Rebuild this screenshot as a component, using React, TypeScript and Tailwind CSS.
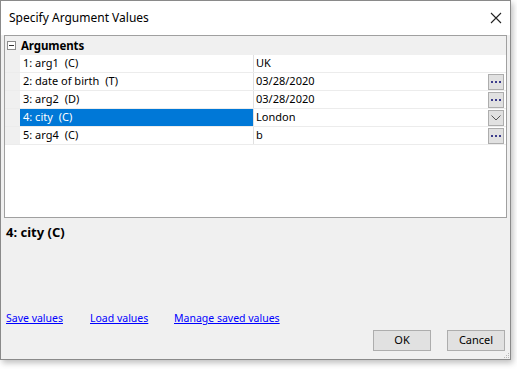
import React from "react";

const rows = [
  { label: "1: arg1  (C)", value: "UK", btn: "" },
  { label: "2: date of birth  (T)", value: "03/28/2020", btn: "dots" },
  { label: "3: arg2  (D)", value: "03/28/2020", btn: "dots" },
  { label: "4: city  (C)", value: "London", btn: "drop", sel: true },
  { label: "5: arg4  (C)", value: "b", btn: "dots" },
];

function Dots() {
  return (
    <div className="w-[16px] h-[16px] bg-[#e1e1e1] border border-[#adadad] flex items-center justify-center gap-[2px] mr-[2px]">
      <span className="w-[2px] h-[2px] bg-[#3c3c8c]" />
      <span className="w-[2px] h-[2px] bg-[#3c3c8c]" />
      <span className="w-[2px] h-[2px] bg-[#3c3c8c]" />
    </div>
  );
}

function Drop() {
  return (
    <div className="w-[16px] h-[16px] bg-[#e1e1e1] border border-[#adadad] flex items-center justify-center mr-[2px]">
      <svg width="10" height="6" viewBox="0 0 10 6">
        <path d="M0.5 0.5 L5 5 L9.5 0.5" stroke="#555" strokeWidth="1" fill="none" />
      </svg>
    </div>
  );
}

export default function App() {
  return (
    <div
      className="w-[517px] h-[369px] bg-white relative"
      style={{ fontFamily: '"Noto Sans", "Open Sans", sans-serif' }}
    >
      <div className="w-[511px] h-[360px] bg-[#f0f0f0] border border-[#8a8a8a] flex flex-col shadow-[2px_3px_6px_rgba(0,0,0,0.25)] relative">
        {/* Title bar */}
        <div className="h-[34px] bg-white flex items-center justify-between pl-[8px] pr-[3px] shrink-0">
          <span className="text-[12px] text-black">Specify Argument Values</span>
          <svg width="12" height="12" viewBox="0 0 12 12" className="mr-[5px]">
            <path d="M1 1 L11 11 M11 1 L1 11" stroke="#222" strokeWidth="1.1" />
          </svg>
        </div>
        {/* Grid */}
        <div className="mx-[3px] h-[183px] bg-white border border-[#a0a0a0] flex flex-col text-[11px] text-black">
          <div className="h-[19px] bg-[#f0f0f0] flex items-center shrink-0">
            <div className="w-[9px] h-[9px] border border-[#8c8c8c] bg-white ml-[2px] flex items-center justify-center">
              <span className="w-[5px] h-[1px] bg-[#333]" />
            </div>
            <span className="ml-[5px] font-bold text-[11.5px] tracking-[-0.1px]">Arguments</span>
          </div>
          {rows.map((r, i) => (
            <div key={i} className="h-[18px] flex shrink-0 border-b border-[#ececec]">
              <div className="w-[15px] bg-[#f0f0f0]" />
              <div
                className={
                  "w-[234px] flex items-center pl-[3px] border-r border-[#e0e0e0] " +
                  (r.sel ? "bg-[#0078d7] text-white" : "")
                }
              >
                {r.label.split("  ").map((p, j) => (
                  <span key={j} className={j > 0 ? "ml-[6px]" : ""}>
                    {p}
                  </span>
                ))}
              </div>
              <div className="flex-1 flex items-center justify-between pl-[2px]">
                <span>{r.value}</span>
                {r.btn === "dots" ? <Dots /> : r.btn === "drop" ? <Drop /> : null}
              </div>
            </div>
          ))}
          <div className="flex-1" />
        </div>
        {/* Description */}
        <div className="px-[5px] pt-[5px] text-[13px] font-bold text-black">4: city (C)</div>
        <div className="flex-1" />
        {/* Links */}
        <div className="flex items-center pl-[5px] text-[10.5px] text-[#0000ff] underline mb-[3px]">
          <span className="w-[84px]">Save values</span>
          <span className="w-[84px]">Load values</span>
          <span>Manage saved values</span>
        </div>
        {/* Buttons */}
        <div className="flex justify-end gap-[16px] pr-[5px] pb-[8px] text-[11px] text-black">
          <div className="w-[58px] h-[21px] bg-[#e1e1e1] border border-[#adadad] flex items-center justify-center">
            OK
          </div>
          <div className="w-[58px] h-[21px] bg-[#e1e1e1] border border-[#adadad] flex items-center justify-center">
            Cancel
          </div>
        </div>
        {/* Resize grip */}
        <div className="absolute right-[1px] bottom-[1px] grid grid-cols-3 gap-[1px]">
          <span className="w-[1px] h-[1px]" />
          <span className="w-[1px] h-[1px]" />
          <span className="w-[1px] h-[1px] bg-[#b8b8b8]" />
          <span className="w-[1px] h-[1px]" />
          <span className="w-[1px] h-[1px] bg-[#b8b8b8]" />
          <span className="w-[1px] h-[1px] bg-[#b8b8b8]" />
          <span className="w-[1px] h-[1px] bg-[#b8b8b8]" />
          <span className="w-[1px] h-[1px] bg-[#b8b8b8]" />
          <span className="w-[1px] h-[1px] bg-[#b8b8b8]" />
        </div>
      </div>
    </div>
  );
}
